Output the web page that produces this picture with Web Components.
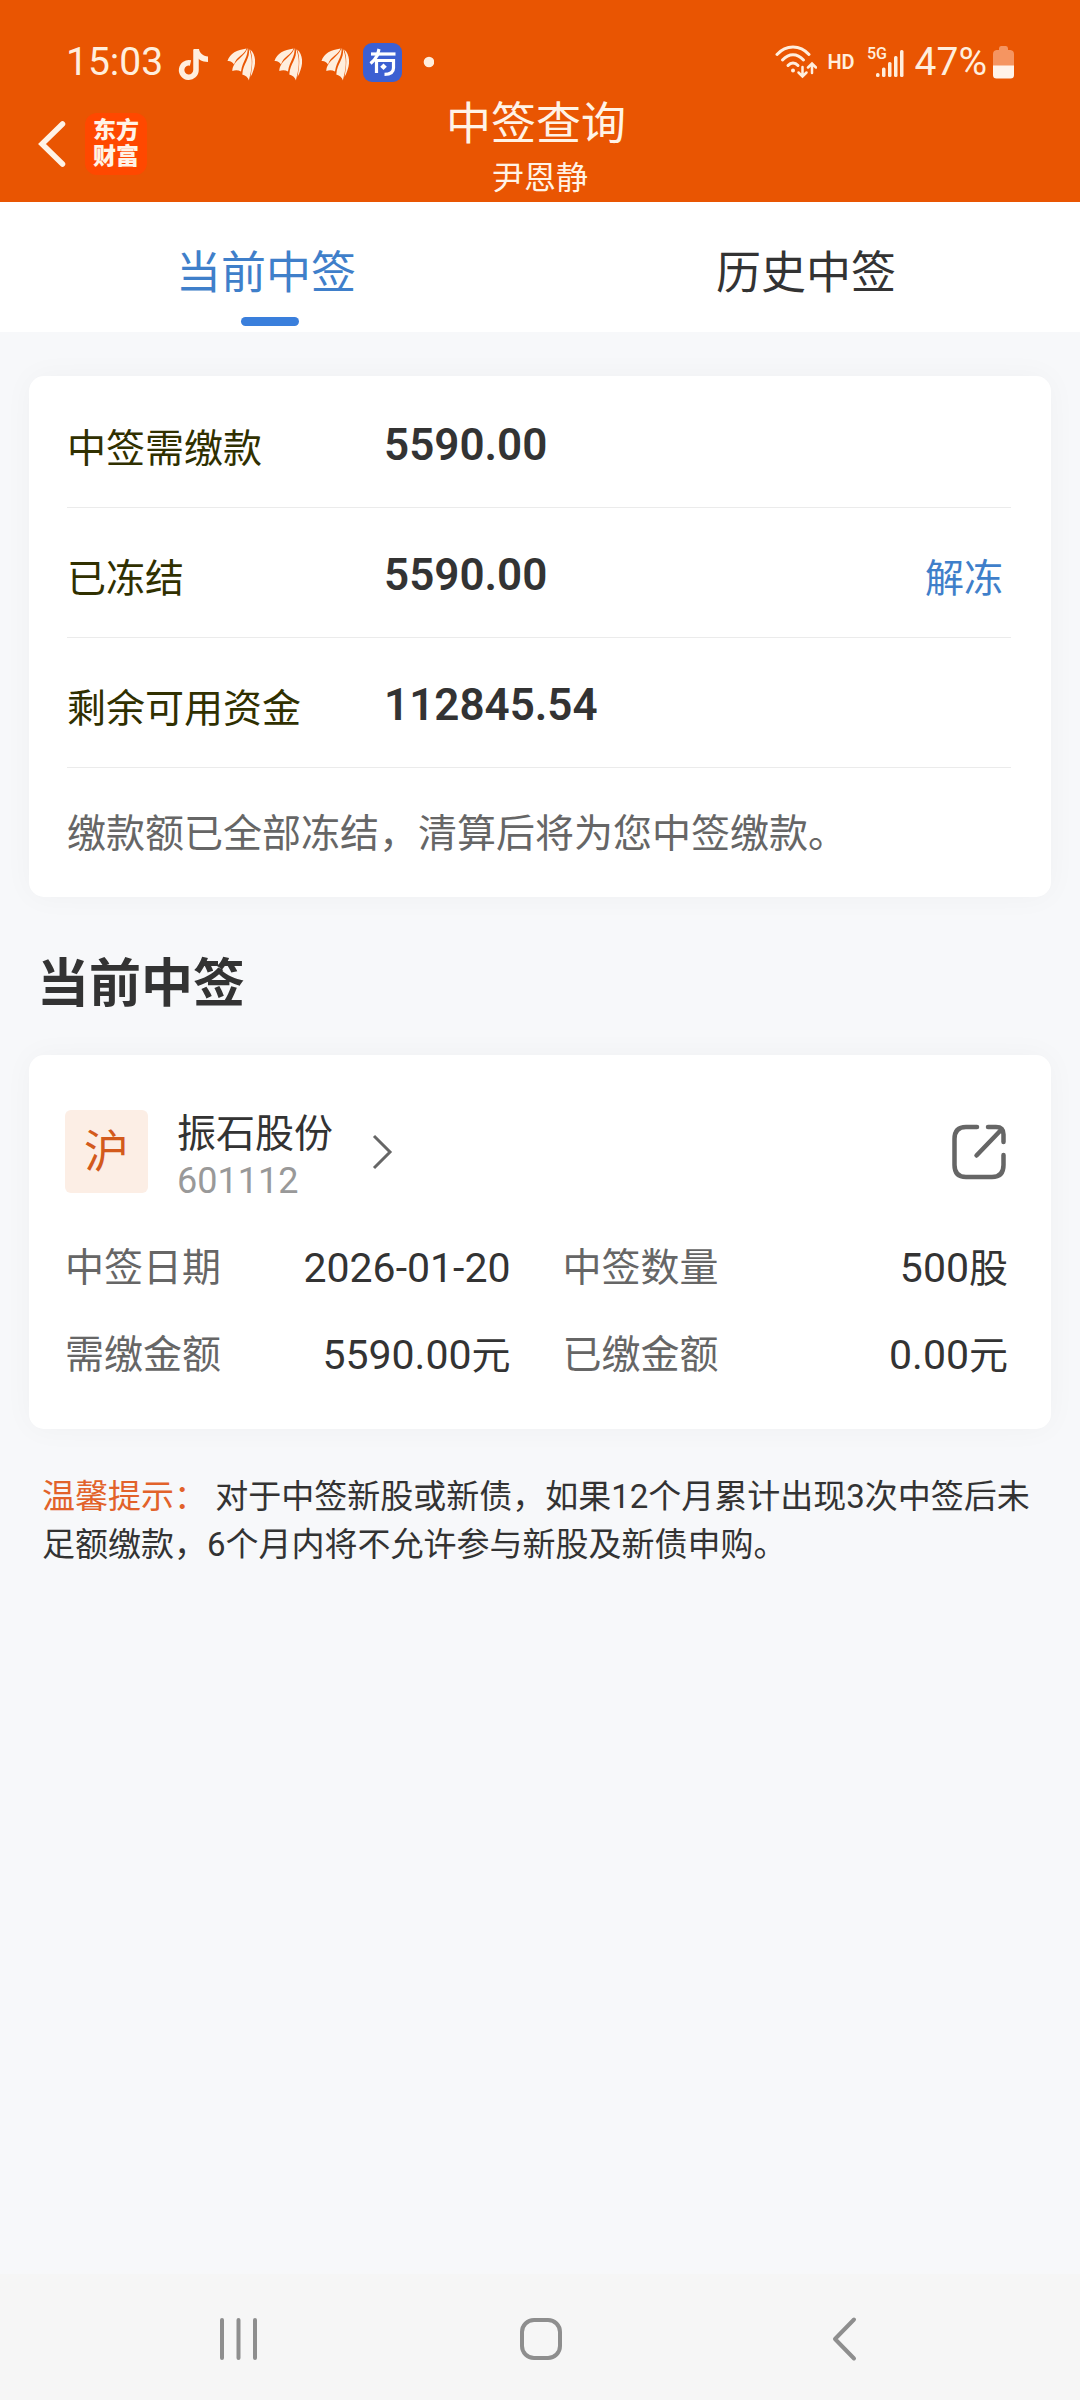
<!DOCTYPE html>
<html lang="zh-CN">
<head>
<meta charset="utf-8">
<meta name="viewport" content="width=device-width, initial-scale=1">
<title>中签查询</title>
<style>
  :root {
    --brand: #e95502;
    --blue: #3f7fca;
    --ink: #333;
    --ink-mid: #666;
    --ink-soft: #999;
    --line: #ebebeb;
    --page: #f7f8fa;
  }
  body {
    margin: 0;
    background: var(--page);
    color: var(--ink);
    font-family: Roboto, "Noto Sans CJK SC", sans-serif;
    font-size: 39px;
  }
</style>
</head>
<body>
<lottery-page></lottery-page>

<script>
const define = (name, html) => {
  const template = document.createElement('template');
  template.innerHTML = html;
  customElements.define(name, class extends HTMLElement {
    constructor() {
      super();
      this.attachShadow({ mode: 'open' }).append(template.content.cloneNode(true));
    }
  });
};

const wing = `<svg width="33" height="48" viewBox="0 0 33 48" fill="#ffeedd" aria-hidden="true">
  <path d="M5.500 23C8 15 15 12 24.500 10.500C22.500 17 14.500 18 12 26.500C10.500 24 8 22.500 5.500 23Z"/>
  <path d="M25.500 10C26.500 18.500 20.500 23 19 33.500C16 31.800 13 32 10.300 33C11 22 22 20 25.500 10Z"/>
  <path d="M26.800 10.500C28.500 21 21 25 20.300 36.500C24 37.500 26 39.800 27 42.500C28 36.500 33 24 26.800 10.500Z"/>
  <path d="M28.200 11.500C34 16 34 26 31.500 32C30.700 34.500 29.700 37 28.500 39C29.500 32 32 22 28.200 11.500Z"/>
</svg>`;

define('status-bar', `
<style>
  :host { display: flex; justify-content: space-between; align-items: center; height: 60px;
    padding: 32px 66px 0; color: #ffeedd; font-size: 39px; line-height: 60px; }
  .group { display: flex; align-items: center; gap: 14px; }
  .group.right { gap: 10px; }
  .battery { display: flex; align-items: center; gap: 6px; }
  .hd { font-size: 20px; font-weight: 600; }
  svg { display: block; flex: none; }
  .net { font-size: 16px; font-weight: 500; }
</style>
<div class="group">
  <span>15:03</span>
  <svg width="31" height="48" viewBox="0 0 31 48" aria-hidden="true">
    <path d="M19 12V32A7.200 7.200 0 1 1 13.500 25" fill="none" stroke="#ffeedd" stroke-width="5.500"/>
    <path d="M16.300 11H22C22.500 15 26 18 31 18.500V24C25 24 21 21 19 18Z" fill="#ffeedd"/>
  </svg>
  ${wing}${wing}${wing}
  <svg width="39" height="39" viewBox="0 0 39 39" aria-hidden="true">
    <rect width="39" height="39" rx="9" fill="#3c60d2"/>
    <g fill="none" stroke="#fff" stroke-width="3.200">
      <path d="M8 11H32.500"/><path d="M16 6L14.500 12C12.500 16 10 18.500 7.500 20.500"/>
      <path d="M13.500 30V17.500H30.500V25C30.500 29.500 27 31.300 21.500 31.300"/>
    </g>
    <path d="M20.500 20.500L23.800 23.800L20.500 27.100L17.200 23.800Z" fill="#fff"/>
  </svg>
  <svg width="18" height="18" viewBox="0 0 18 18" aria-hidden="true"><circle cx="13" cy="9" r="5.300" fill="#ffeedd"/></svg>
</div>
<div class="group right">
  <svg width="42" height="36" viewBox="0 0 42 36" fill="none" stroke="#ffeedd" stroke-width="3" stroke-linecap="round" aria-hidden="true">
    <path d="M2 10.500C11 0.500 25 0.500 34 10.500"/><path d="M7.500 16C14 9 22 9 28.500 16"/><path d="M13 21.500C16 18 20 18 23 21.500"/>
    <circle cx="18" cy="26.500" r="2" fill="#ffeedd" stroke="none"/>
    <g stroke-width="2.500"><path d="M27.500 23V32M23.500 28.500L27.500 32.500L31.500 28.500"/><path d="M37 29V20M33 23.500L37 19.500L41 23.500"/></g>
  </svg>
  <span class="hd">HD</span>
  <svg width="40" height="36" viewBox="0 0 40 36" fill="#ffeedd" aria-hidden="true">
    <text class="net" x="2" y="15">5G</text>
    <rect x="11" y="29" width="3.500" height="4" rx="1.500"/><rect x="17" y="23.500" width="3.500" height="9.500" rx="1.500"/>
    <rect x="23" y="18" width="3.500" height="15" rx="1.500"/><rect x="29" y="12" width="3.500" height="21" rx="1.500"/>
    <rect x="35" y="6" width="3.500" height="27" rx="1.500"/>
  </svg>
  <span class="battery">47%
    <svg width="21" height="36" viewBox="0 0 21 36" aria-hidden="true">
      <path d="M6 4.500Q6 2 8 2H13Q15 2 15 4.500V6H17.500Q21 6.500 21 10V22H0V10Q0 6.500 3.500 6H6Z" fill="#f59561"/>
      <path d="M0 21.500H21V31Q21 34.500 17.500 34.500H3.500Q0 34.500 0 31Z" fill="#fff3ea"/>
    </svg>
  </span>
</div>`);

define('app-bar', `
<style>
  :host { display: grid; grid-template-columns: 1fr auto 1fr; align-items: center; color: #fff3e6; }
  .lead { display: flex; align-items: center; gap: 18px; padding: 0 0 6px 37px; }
  button { border: 0; padding: 0; background: none; display: block; }
  svg { display: block; }
  .logo { width: 62px; height: 62px; border-radius: 12px; background: #ff4800; box-sizing: border-box;
    padding: 5px 0; text-align: center; font-size: 23px; line-height: 26px; font-weight: 900; }
  h1, p { margin: 0; font-weight: 400; text-align: center; }
  h1 { padding: 4px 8px 0 0; font-size: 45px; line-height: 58px; }
  p { font-size: 32px; line-height: 48px; }
</style>
<div class="lead">
  <button aria-label="返回"><svg width="30" height="48" viewBox="0 0 30 48" fill="none" stroke="#fff3e6" stroke-width="5.500" stroke-linecap="round"><path d="M25.500 4L5 24L25.500 44"/></svg></button>
  <div class="logo">东方<br>财富</div>
</div>
<div><h1><slot></slot></h1><p><slot name="user"></slot></p></div>`);

define('tab-bar', `
<style>
  :host { display: flex; height: 130px; background: #fff; }
  button { flex: 1; border: 0; padding: 44px 0 0; background: none; color: var(--ink);
    font: inherit; font-size: 45px; line-height: 56px; display: flex; flex-direction: column; align-items: center; gap: 15px; }
  span { padding-right: 8px; }
  button[aria-selected=true] { color: var(--blue); }
  button[aria-selected=true]::after { content: ""; width: 58px; height: 9px; border-radius: 5px; background: #3a7fdc; }
</style>
<div role="tablist" style="display:contents">
  <button role="tab" aria-selected="true"><span>当前中签</span></button>
  <button role="tab" aria-selected="false"><span>历史中签</span></button>
</div>`);

define('white-card', `
<style>
  :host { display: block; margin: 0 29px; border-radius: 15px; background: #fff; box-shadow: 0 0 30px rgba(0, 0, 0, .035); }
</style><slot></slot>`);

define('fund-row', `
<style>
  :host { display: flex; align-items: center; box-sizing: border-box; height: 130px; padding-top: 4px;
    border-bottom: 1px solid var(--line); color: #303000; }
  .label { width: 317px; flex: none; }
  .value { flex: 1; color: var(--ink); font-size: 44px; font-weight: 600; }
</style>
<span class="label"><slot></slot></span><span class="value"><slot name="value"></slot></span><slot name="action"></slot>`);

define('fund-summary', `
<style>
  :host { display: block; padding: 2px 40px 0 38px; }
  button { border: 0; padding: 0 8px; background: none; color: var(--blue); font: inherit; }
  p { margin: 0; padding-top: 3px; color: var(--ink-mid); line-height: 126px; }
</style>
<fund-row>中签需缴款<span slot="value">5590.00</span></fund-row>
<fund-row>已冻结<span slot="value">5590.00</span><button slot="action">解冻</button></fund-row>
<fund-row>剩余可用资金<span slot="value">112845.54</span></fund-row>
<p>缴款额已全部冻结，清算后将为您中签缴款。</p>`);

define('stock-field', `
<style>
  :host { display: flex; justify-content: space-between; line-height: 86px; color: var(--ink-mid); }
  .value { color: var(--ink); font-size: 41px; }
  ::slotted([slot=unit]) { font-size: 39px; }
</style>
<span><slot></slot></span><span class="value"><slot name="value"></slot><slot name="unit"></slot></span>`);

define('stock-card', `
<style>
  :host { display: block; padding: 55px 43px 30px 36px; }
  header { display: flex; align-items: center; height: 83px; margin-bottom: 32px; }
  .badge { width: 83px; height: 83px; border-radius: 6px; background: #fceee5; color: #d35a1c;
    font-size: 45px; line-height: 86px; text-align: center; }
  a { display: flex; align-items: center; margin-left: 29px; gap: 38px; color: var(--ink); text-decoration: none; flex: 1; }
  .text { padding-top: 10px; }
  .name { display: block; line-height: 48px; }
  .code { display: block; font-size: 36px; line-height: 46px; color: var(--ink-soft); }
  button { border: 0; padding: 0; background: none; }
  svg { display: block; fill: none; stroke: #666; stroke-linecap: round; stroke-linejoin: round; }
  .fields { display: grid; grid-template-columns: 1fr 1fr; column-gap: 52px; }
</style>
<header>
  <span class="badge">沪</span>
  <a href="#601112">
    <span class="text"><span class="name">振石股份</span><span class="code">601112</span></span>
    <svg width="22" height="36" viewBox="0 0 22 36" stroke-width="3" style="stroke-linecap:butt;stroke-linejoin:miter"><path d="M3 2L19 18L3 34"/></svg>
  </a>
  <button aria-label="分享"><svg width="56" height="56" viewBox="0 0 56 56" stroke-width="4.500">
    <path d="M25 3H14Q2.500 3 2.500 15V41Q2.500 53 14 53H40Q51.500 53 51.500 41V31"/>
    <path d="M36 3H44Q51.500 3 51.500 10.500V18"/><path d="M24.500 31.500L49 6"/>
  </svg></button>
</header>
<div class="fields">
  <stock-field>中签日期<span slot="value">2026-01-20</span></stock-field>
  <stock-field>中签数量<span slot="value">500</span><span slot="unit">股</span></stock-field>
  <stock-field>需缴金额<span slot="value">5590.00</span><span slot="unit">元</span></stock-field>
  <stock-field>已缴金额<span slot="value">0.00</span><span slot="unit">元</span></stock-field>
</div>`);

define('warm-tip', `
<style>
  :host { display: block; padding: 44px 42px 0; font-size: 33px; line-height: 48px; color: var(--ink); }
  ::slotted(b) { font-weight: 400; color: #e2622a; }
</style><slot></slot>`);

define('nav-bar', `
<style>
  :host { display: flex; height: 126px; margin-top: auto; padding: 0 8%; background: #f6f6f6; }
  button { flex: 1; border: 0; padding: 4px 0 0; background: none; display: flex; align-items: center; justify-content: center; }
  svg { fill: none; stroke: #8e8e8e; stroke-width: 4; stroke-linecap: round; stroke-linejoin: round; }
</style>
<button aria-label="最近任务"><svg width="44" height="46" viewBox="0 0 44 46"><path d="M6 4V42M22.500 4V42M39 4V42"/></svg></button>
<button aria-label="主屏幕"><svg width="44" height="46" viewBox="0 0 44 46"><rect x="4" y="4" width="38" height="38" rx="12"/></svg></button>
<button aria-label="返回"><svg width="44" height="46" viewBox="0 0 44 46"><path d="M34 3.500L15 23L34 42.500"/></svg></button>`);

define('lottery-page', `
<style>
  :host { display: flex; flex-direction: column; min-height: 100vh; }
  .top { background: var(--brand); }
  .funds { margin-top: 44px; }
  h2 { margin: 0; padding: 48px 37px 30px; font-size: 52px; line-height: 80px; font-weight: 700; }
</style>
<div class="top">
  <status-bar></status-bar>
  <app-bar>中签查询<span slot="user">尹恩静</span></app-bar>
</div>
<tab-bar></tab-bar>
<white-card class="funds"><fund-summary></fund-summary></white-card>
<h2>当前中签</h2>
<white-card><stock-card></stock-card></white-card>
<warm-tip><b>温馨提示：</b> 对于中签新股或新债，如果12个月累计出现3次中签后未足额缴款，6个月内将不允许参与新股及新债申购。</warm-tip>
<nav-bar></nav-bar>`);
</script>
</body>
</html>
